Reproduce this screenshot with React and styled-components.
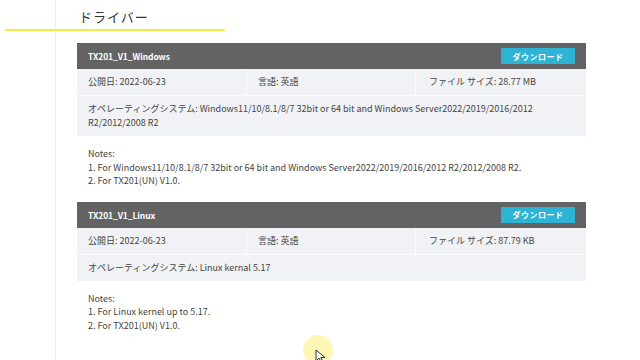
import React from "react";
import styled, { createGlobalStyle } from "styled-components";

const GlobalStyle = createGlobalStyle`
  html, body {
    margin: 0;
    padding: 0;
    background: #ffffff;
  }
  body {
    font-family: "Noto Sans CJK JP", "Noto Sans", sans-serif;
    color: #444;
    overflow: hidden;
  }
`;

const Page = styled.div`
  position: relative;
  display: flex;
  width: 640px;
  height: 360px;
  overflow: hidden;
`;

const Sidebar = styled.div`
  width: 55px;
  flex-shrink: 0;
  border-right: 1px solid #ececec;
`;

const Main = styled.main`
  flex: 1;
  padding: 6px 0 0 21px;
`;

const Title = styled.h2`
  position: relative;
  margin: 0 0 15px 2px;
  font-size: 13px;
  font-weight: 400;
  letter-spacing: 1px;
  line-height: 22px;
  color: #333;

  &::after {
    content: "";
    position: absolute;
    left: -74px;
    top: 23px;
    width: 220px;
    height: 2px;
    background: #f3ec45;
  }
`;

const Driver = styled.section`
  width: 509px;
  margin-bottom: 14px;
`;

const Header = styled.div`
  display: flex;
  align-items: center;
  justify-content: space-between;
  height: 26px;
  padding: 0 11px;
  background: #636363;
  color: #fff;
  font-size: 8.5px;
  font-weight: 700;
  letter-spacing: -0.1px;
`;

const DownloadButton = styled.button`
  width: 74px;
  height: 16px;
  padding: 0;
  border: none;
  background: #2db4d4;
  color: #fff;
  font-family: inherit;
  font-size: 8px;
  font-weight: 700;
  letter-spacing: 0.5px;
`;

const InfoRow = styled.div`
  display: grid;
  grid-template-columns: 169px 169px 1fr;
  background: #f1f2f5;
  border-bottom: 1px solid #fafbfc;
`;

const InfoCell = styled.div`
  height: 26px;
  line-height: 26px;
  padding: 0 ${(p) => (p.$last ? "13px" : "11px")};
  font-size: 9px;
  color: #444;
  border-left: ${(p) => (p.$first ? "none" : "1px solid #fafbfc")};
`;

const OsRow = styled.div`
  padding: 6px 11px;
  background: #f1f2f5;
  font-size: 9px;
  line-height: 14px;
  color: #444;
`;

const Notes = styled.div`
  padding: 11px 11px 0;
  font-size: 9px;
  line-height: 13.5px;
  color: #444;
`;

const Cursor = styled.div`
  position: absolute;
  left: 303px;
  top: 335px;
  width: 30px;
  height: 30px;
  border-radius: 50%;
  background: rgba(252, 238, 120, 0.55);
`;

const Arrow = styled.svg`
  position: absolute;
  left: 315px;
  top: 349px;
`;

const drivers = [
  {
    name: "TX201_V1_Windows",
    date: "2022-06-23",
    lang: "英語",
    size: "28.77 MB",
    os: "Windows11/10/8.1/8/7 32bit or 64 bit and Windows Server2022/2019/2016/2012 R2/2012/2008 R2",
    notes: [
      "1. For Windows11/10/8.1/8/7 32bit or 64 bit and Windows Server2022/2019/2016/2012 R2/2012/2008 R2.",
      "2. For TX201(UN) V1.0.",
    ],
  },
  {
    name: "TX201_V1_Linux",
    date: "2022-06-23",
    lang: "英語",
    size: "87.79 KB",
    os: "Linux kernal 5.17",
    notes: ["1. For Linux kernel up to 5.17.", "2. For TX201(UN) V1.0."],
  },
];

export default function App() {
  return (
    <Page>
      <GlobalStyle />
      <Sidebar />
      <Main>
        <Title>ドライバー</Title>
        {drivers.map((d) => (
          <Driver key={d.name}>
            <Header>
              <span>{d.name}</span>
              <DownloadButton>ダウンロード</DownloadButton>
            </Header>
            <InfoRow>
              <InfoCell $first>公開日: {d.date}</InfoCell>
              <InfoCell>言語: {d.lang}</InfoCell>
              <InfoCell $last>ファイル サイズ: {d.size}</InfoCell>
            </InfoRow>
            <OsRow>オペレーティングシステム: {d.os}</OsRow>
            <Notes>
              Notes:
              {d.notes.map((n) => (
                <div key={n}>{n}</div>
              ))}
            </Notes>
          </Driver>
        ))}
      </Main>
      <Cursor />
      <Arrow width="12" height="14" viewBox="0 0 12 14">
        <path d="M1 1 L1 12 L4 9 L6.5 13.5 L8 12.8 L5.8 8.5 L10 8.5 Z" fill="#fff" stroke="#333" strokeWidth="1" />
      </Arrow>
    </Page>
  );
}
